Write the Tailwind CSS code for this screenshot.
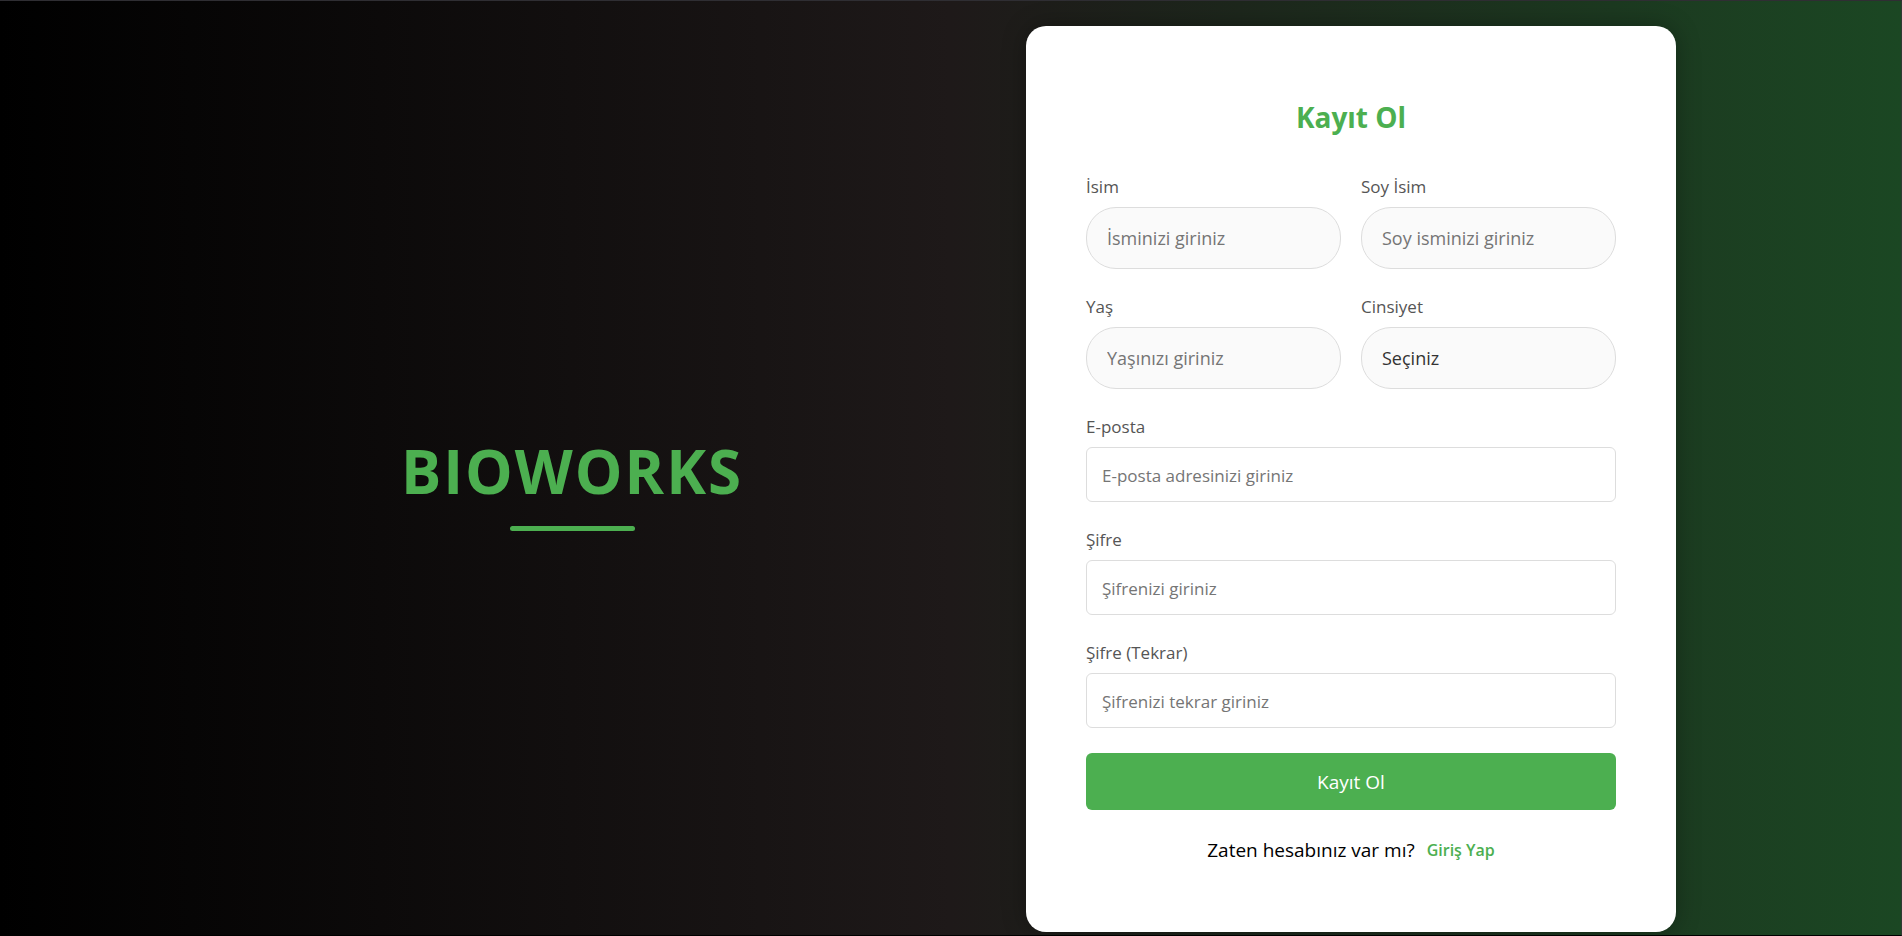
<!DOCTYPE html>
<html lang="tr">
<head>
<meta charset="utf-8">
<meta name="viewport" content="width=device-width, initial-scale=1">
<title>Bioworks - Kayıt Ol</title>
<script src="https://cdn.jsdelivr.net/npm/@tailwindcss/browser@4"></script>
</head>
<body class="font-['Segoe_UI','Open_Sans','Noto_Sans',sans-serif]">
<main class="flex min-h-screen items-center border-t border-r border-b border-t-[#2f2e33] border-r-[#2f3a33] border-b-black bg-linear-to-r/srgb from-black via-[#1e1919] to-[#1b4723] pt-[25px] pr-[225px] pb-[3px] pl-[118px]">
  <section class="flex flex-1 flex-col items-center gap-[15px] pt-1">
    <h1 class="text-[60px] leading-[80px] font-bold tracking-[2px] text-[#4caf50]">BIOWORKS</h1>
    <div class="h-[5px] w-[125px] rounded-full bg-[#4caf50]"></div>
  </section>

  <form class="w-full max-w-[650px] rounded-[20px] bg-white p-[60px] shadow-[0_0_25px_rgba(0,0,0,0.3)]">
    <h2 class="mb-[26px] text-center text-[28px] leading-[62px] font-bold text-[#4caf50]">Kayıt Ol</h2>

    <div class="grid grid-cols-2 gap-x-5">
      <div class="mb-[25px]">
        <label for="isim" class="mb-2 block text-[17px] leading-[25px] text-[#555]">İsim</label>
        <input id="isim" type="text" placeholder="İsminizi giriniz" class="block h-[62px] w-full rounded-[30px] border border-[#ddd] bg-[#fafafa] px-5 text-[18px] text-[#333] placeholder:text-[#757575]">
      </div>
      <div class="mb-[25px]">
        <label for="soyisim" class="mb-2 block text-[17px] leading-[25px] text-[#555]">Soy İsim</label>
        <input id="soyisim" type="text" placeholder="Soy isminizi giriniz" class="block h-[62px] w-full rounded-[30px] border border-[#ddd] bg-[#fafafa] px-5 text-[18px] text-[#333] placeholder:text-[#757575]">
      </div>
      <div class="mb-[25px]">
        <label for="yas" class="mb-2 block text-[17px] leading-[25px] text-[#555]">Yaş</label>
        <input id="yas" type="text" inputmode="numeric" placeholder="Yaşınızı giriniz" class="block h-[62px] w-full rounded-[30px] border border-[#ddd] bg-[#fafafa] px-5 text-[18px] text-[#333] placeholder:text-[#757575]">
      </div>
      <div class="mb-[25px]">
        <label for="cinsiyet" class="mb-2 block text-[17px] leading-[25px] text-[#555]">Cinsiyet</label>
        <select id="cinsiyet" class="block h-[62px] w-full appearance-none rounded-[30px] border border-[#ddd] bg-[#fafafa] px-5 text-[18px] text-[#333]">
          <option>Seçiniz</option>
        </select>
      </div>
    </div>

    <div class="mb-[25px]">
      <label for="eposta" class="mb-2 block text-[17px] leading-[25px] text-[#555]">E-posta</label>
      <input id="eposta" type="email" placeholder="E-posta adresinizi giriniz" class="block h-[55px] w-full rounded-md border border-[#ddd] bg-white px-[15px] pt-0.5 text-[17px] text-[#333] placeholder:text-[#757575]">
    </div>
    <div class="mb-[25px]">
      <label for="sifre" class="mb-2 block text-[17px] leading-[25px] text-[#555]">Şifre</label>
      <input id="sifre" type="password" placeholder="Şifrenizi giriniz" class="block h-[55px] w-full rounded-md border border-[#ddd] bg-white px-[15px] pt-0.5 text-[17px] text-[#333] placeholder:text-[#757575]">
    </div>
    <div class="mb-[25px]">
      <label for="sifre-tekrar" class="mb-2 block text-[17px] leading-[25px] text-[#555]">Şifre (Tekrar)</label>
      <input id="sifre-tekrar" type="password" placeholder="Şifrenizi tekrar giriniz" class="block h-[55px] w-full rounded-md border border-[#ddd] bg-white px-[15px] pt-0.5 text-[17px] text-[#333] placeholder:text-[#757575]">
    </div>

    <button type="submit" class="block h-[57px] w-full rounded-md bg-[#4caf50] pt-0.5 text-[19px] text-white">Kayıt Ol</button>

    <p class="mt-[18px] flex items-center justify-center gap-3 text-[19px] leading-[44px] text-black">
      <span>Zaten hesabınız var mı?</span>
      <a href="#" class="text-[16px] font-semibold text-[#4caf50]">Giriş Yap</a>
    </p>
  </form>
</main>
</body>
</html>
